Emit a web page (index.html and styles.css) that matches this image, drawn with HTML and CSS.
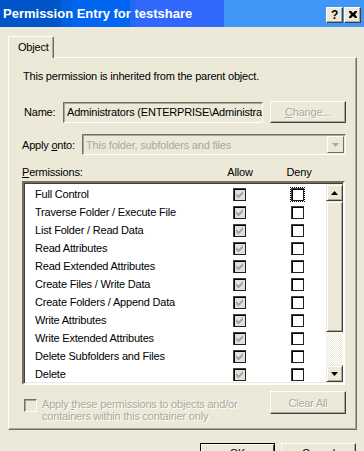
FILE: index.html
```html
<!DOCTYPE html>
<html lang="en">
<head>
    <meta charset="UTF-8">
    <title>Permission Entry for testshare</title>
    <link rel="stylesheet" href="styles.css">
</head>
<body>
    <div class="titlebar">
        <span class="title">Permission Entry for testshare</span>
        <div class="caption-btns">
            <span class="cap-btn">?</span>
            <span class="cap-btn">
                <svg width="8" height="7" viewBox="0 0 8 7"><path d="M0 0h2l2 2 2-2h2v1L6 3.5 8 6v1H6L4 5 2 7H0V6l2-2.5L0 1z" fill="#000"/></svg>
            </span>
        </div>
    </div>

    <div class="dialog">
        <div class="tabs">
            <div class="tab">Object</div>
        </div>

        <div class="panel">
            <p class="info">This permission is inherited from the parent object.</p>

            <div class="name-row">
                <span class="label">Name:</span>
                <div class="field">Administrators (ENTERPRISE\Administrators)</div>
                <span class="btn disabled"><u>C</u>hange...</span>
            </div>

            <div class="apply-row">
                <span class="label">Apply <u>o</u>nto:</span>
                <div class="select">
                    <span class="select-text">This folder, subfolders and files</span>
                    <span class="drop">
                        <svg width="7" height="4" viewBox="0 0 7 4"><path d="M0 0h7L3.5 4z" fill="#aca899"/></svg>
                    </span>
                </div>
            </div>

            <div class="perm-head">
                <span><u>P</u>ermissions:</span>
                <span class="col">Allow</span>
                <span class="col">Deny</span>
            </div>

            <div class="list">
                <div class="rows">
                    <div class="perm"><span>Full Control</span><span class="cell"><i class="chk on"></i></span><span class="cell"><span class="focus"><i class="chk"></i></span></span></div>
                    <div class="perm"><span>Traverse Folder / Execute File</span><span class="cell"><i class="chk on"></i></span><span class="cell"><i class="chk"></i></span></div>
                    <div class="perm"><span>List Folder / Read Data</span><span class="cell"><i class="chk on"></i></span><span class="cell"><i class="chk"></i></span></div>
                    <div class="perm"><span>Read Attributes</span><span class="cell"><i class="chk on"></i></span><span class="cell"><i class="chk"></i></span></div>
                    <div class="perm"><span>Read Extended Attributes</span><span class="cell"><i class="chk on"></i></span><span class="cell"><i class="chk"></i></span></div>
                    <div class="perm"><span>Create Files / Write Data</span><span class="cell"><i class="chk on"></i></span><span class="cell"><i class="chk"></i></span></div>
                    <div class="perm"><span>Create Folders / Append Data</span><span class="cell"><i class="chk on"></i></span><span class="cell"><i class="chk"></i></span></div>
                    <div class="perm"><span>Write Attributes</span><span class="cell"><i class="chk on"></i></span><span class="cell"><i class="chk"></i></span></div>
                    <div class="perm"><span>Write Extended Attributes</span><span class="cell"><i class="chk on"></i></span><span class="cell"><i class="chk"></i></span></div>
                    <div class="perm"><span>Delete Subfolders and Files</span><span class="cell"><i class="chk on"></i></span><span class="cell"><i class="chk"></i></span></div>
                    <div class="perm"><span>Delete</span><span class="cell"><i class="chk on"></i></span><span class="cell"><i class="chk"></i></span></div>
                </div>
                <div class="scrollbar">
                    <span class="sb-btn">
                        <svg width="7" height="4" viewBox="0 0 7 4"><path d="M3.5 0L7 4H0z" fill="#000"/></svg>
                    </span>
                    <span class="sb-thumb"></span>
                    <span class="sb-track"></span>
                    <span class="sb-btn">
                        <svg width="7" height="4" viewBox="0 0 7 4"><path d="M0 0h7L3.5 4z" fill="#000"/></svg>
                    </span>
                </div>
            </div>

            <div class="bottom-row">
                <i class="chk disabled"></i>
                <p class="apply-text">Apply <u>t</u>hese permissions to objects and/or<br>containers within this container only</p>
                <span class="btn disabled clear">Clear All</span>
            </div>
        </div>

        <div class="actions">
            <span class="btn default">OK</span>
            <span class="btn">Cancel</span>
        </div>
    </div>
</body>
</html>
```

FILE: styles.css
```css
* {
    margin: 0;
    padding: 0;
    box-sizing: border-box;
}

body {
    width: 364px;
    height: 451px;
    overflow: hidden;
    background: #ece9d8;
    font-family: "Liberation Sans", Arial, sans-serif;
    font-size: 11px;
    letter-spacing: -0.2px;
    color: #000;
}

u {
    text-decoration: underline;
}

.titlebar {
    height: 27px;
    display: flex;
    align-items: center;
    justify-content: space-between;
    padding: 0 3px 0 3px;
    background: linear-gradient(90deg,
        #0056c8 0, #0056c8 61px,
        #0061e4 61px, #0061e4 72px,
        #0065f0 72px, #0065f0 130px,
        #1d6af6 130px, #1d6af6 135px,
        #3068fb 135px, #3068fb 224px,
        #3f97f6 224px);
}

.title {
    color: #fff;
    font-weight: bold;
    font-size: 13px;
    letter-spacing: 0;
}

.caption-btns {
    display: flex;
    gap: 1px;
    margin-top: 2px;
}

.cap-btn {
    width: 17px;
    height: 16px;
    display: flex;
    align-items: center;
    justify-content: center;
    background: #ece9d8;
    border: 1px solid;
    border-color: #fff #404040 #404040 #fff;
    box-shadow: inset -1px -1px 0 #aca899;
    font-weight: bold;
    font-size: 12px;
}

.dialog {
    padding: 9px 7px 0 8px;
}

.tabs {
    display: flex;
    height: 21px;
}

.tab {
    width: 46px;
    height: 22px;
    padding: 4px 0 0 9px;
    background: #ece9d8;
    border: 1px solid;
    border-bottom: none;
    border-color: #fff #716f64 #ece9d8 #fff;
    border-radius: 2px 2px 0 0;
    box-shadow: inset -1px 0 0 #aca899;
    position: relative;
    z-index: 1;
}

.panel {
    height: 373px;
    padding: 0 10px 0 13px;
    border: 1px solid;
    border-color: #fff #716f64 #716f64 #fff;
    box-shadow: inset -1px -1px 0 #aca899;
}

.info {
    margin-top: 12px;
    line-height: 12px;
    padding-left: 1px;
}

.name-row {
    display: flex;
    align-items: center;
    margin-top: 19px;
    height: 22px;
}

.name-row .label {
    width: 41px;
    padding-left: 2px;
}

.field {
    width: 200px;
    height: 21px;
    line-height: 19px;
    padding-left: 3px;
    white-space: nowrap;
    overflow: hidden;
    border: 1px solid;
    border-color: #716f64 #fff #fff #716f64;
    box-shadow: inset 1px 1px 0 #aca899;
}

.btn {
    display: flex;
    align-items: center;
    justify-content: center;
    width: 76px;
    height: 22px;
    background: #ece9d8;
    border: 1px solid;
    border-color: #fff #404040 #404040 #fff;
    box-shadow: inset -1px -1px 0 #aca899;
}

.btn.disabled {
    color: #aca899;
    text-shadow: 1px 1px 0 #fff;
}

.name-row .btn {
    margin-left: auto;
}

.apply-row {
    display: flex;
    align-items: center;
    margin-top: 11px;
    height: 21px;
}

.apply-row .label {
    width: 60px;
}

.select {
    flex: 1;
    height: 21px;
    display: flex;
    align-items: center;
    justify-content: space-between;
    padding: 0 1px 0 3px;
    border: 1px solid;
    border-color: #716f64 #fff #fff #716f64;
    box-shadow: inset 1px 1px 0 #aca899;
    color: #aca899;
}

.drop {
    width: 17px;
    height: 17px;
    display: flex;
    align-items: center;
    justify-content: center;
    border: 1px solid;
    border-color: #fff #716f64 #716f64 #fff;
}

.perm-head {
    display: grid;
    grid-template-columns: 188px 60px 58px;
    margin-top: 11px;
    line-height: 12px;
}

.col {
    text-align: center;
}

.list {
    display: flex;
    margin-top: 3px;
    height: 204px;
    width: 323px;
    background: #fff;
    border: 2px solid;
    border-color: #716f64 #fff #fff #716f64;
    box-shadow: inset 1px 1px 0 #404040, inset -1px -1px 0 #ece9d8;
}

.rows {
    flex: 1;
    padding-top: 2px;
}

.perm {
    display: grid;
    grid-template-columns: 185px 60px 56px;
    height: 18px;
    align-items: center;
}

.perm > span:first-child {
    padding-left: 11px;
    white-space: nowrap;
}

.cell {
    display: flex;
    justify-content: center;
}

.chk {
    display: block;
    width: 13px;
    height: 13px;
    background: #fff;
    border: 1px solid;
    border-color: #404040 #202020 #202020 #404040;
    box-shadow: inset 1px 1px 0 #000;
}

.chk.on {
    background: #e3e1d9 url("data:image/svg+xml,%3Csvg xmlns='http://www.w3.org/2000/svg' width='11' height='11'%3E%3Cpath d='M2 4v3l2 2h1l4-4V2L5 6H4z' fill='%23a5a5a5'/%3E%3C/svg%3E") no-repeat 0 0;
}

.chk.disabled {
    width: 13px;
    height: 13px;
    flex: none;
    background: #ece9d8;
    border-color: #716f64 #fff #fff #716f64;
    box-shadow: inset 1px 1px 0 #aca899;
}

.focus {
    display: block;
    padding: 1px;
    outline: 1px dotted #000;
    outline-offset: -1px;
    margin: -2px;
}

.scrollbar {
    width: 17px;
    display: flex;
    flex-direction: column;
    margin: 1px 0;
}

.sb-btn {
    height: 17px;
    display: flex;
    align-items: center;
    justify-content: center;
    background: #ece9d8;
    border: 1px solid;
    border-color: #ece9d8 #404040 #404040 #ece9d8;
    box-shadow: inset 1px 1px 0 #fff, inset -1px -1px 0 #aca899;
}

.sb-thumb {
    height: 131px;
    background: #ece9d8;
    border: 1px solid;
    border-color: #ece9d8 #404040 #404040 #ece9d8;
    box-shadow: inset 1px 1px 0 #fff, inset -1px -1px 0 #aca899;
}

.sb-track {
    flex: 1;
    background-color: #f4f3ee;
    background-image: repeating-conic-gradient(#ece9d8 0 25%, #fff 0 50%);
    background-size: 2px 2px;
}

.bottom-row {
    display: flex;
    align-items: flex-start;
    margin-top: 6px;
}

.bottom-row .chk {
    margin: 8px 0 0 2px;
}

.apply-text {
    margin: 7px 0 0 5px;
    line-height: 12px;
    white-space: nowrap;
    color: #aca899;
    text-shadow: 1px 1px 0 #fff;
}

.bottom-row .clear {
    margin-left: auto;
    height: 23px;
}

.actions {
    display: flex;
    justify-content: flex-end;
    gap: 6px;
    margin-top: 13px;
    padding-right: 1px;
}

.actions .btn {
    width: 75px;
    height: 23px;
    padding-bottom: 4px;
}

.btn.default {
    border: 1px solid #000;
    box-shadow: inset 1px 1px 0 #fff, inset -1px -1px 0 #404040;
}
```
